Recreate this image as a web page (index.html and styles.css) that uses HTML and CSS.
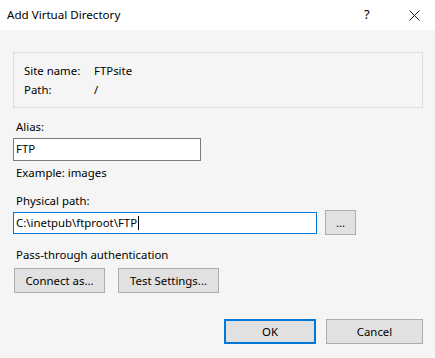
FILE: index.html
```html
<!DOCTYPE html>
<html lang="en">
<head>
    <meta charset="UTF-8">
    <meta name="viewport" content="width=device-width, initial-scale=1.0">
    <title>Add Virtual Directory</title>
    <link rel="stylesheet" href="styles.css">
</head>
<body>
    <div class="dialog">
        <div class="titlebar">
            <div class="title">Add Virtual Directory</div>
            <div class="help">?</div>
            <div class="close">
                <svg width="11" height="11" viewBox="0 0 11 11">
                    <path d="M0.5 0.5 L10.5 10.5 M10.5 0.5 L0.5 10.5" stroke="#1a1a1a" stroke-width="1" fill="none"/>
                </svg>
            </div>
        </div>
        <div class="content">
            <div class="info">
                <div class="info-row"><span class="info-label">Site name:</span><span>FTPsite</span></div>
                <div class="info-row"><span class="info-label">Path:</span><span>/</span></div>
            </div>

            <div class="label first">Alias:</div>
            <div class="field alias">FTP</div>
            <div class="label hint">Example: images</div>

            <div class="label section">Physical path:</div>
            <div class="path-row">
                <div class="field path focused">C:\inetpub\ftproot\FTP<span class="caret"></span></div>
                <button class="btn browse">...</button>
            </div>

            <div class="label section">Pass-through authentication</div>
            <div class="auth-row">
                <button class="btn connect">Connect as...</button>
                <button class="btn test">Test Settings...</button>
            </div>

            <div class="actions">
                <button class="btn ok">OK</button>
                <button class="btn cancel">Cancel</button>
            </div>
        </div>
    </div>
</body>
</html>
```

FILE: styles.css
```css
body {
    margin: 0;
    padding: 0;
    font-family: "Segoe UI", "Noto Sans", "Liberation Sans", sans-serif;
    font-size: 11.4px;
    color: #000;
    background: #f5f5f5;
}
.dialog {
    width: 435px;
    height: 358px;
    display: flex;
    flex-direction: column;
    background: #f5f5f5;
}
.titlebar {
    height: 30px;
    background: #fff;
    display: flex;
    align-items: center;
    padding-left: 7px;
}
.title {
    flex-grow: 1;
    font-size: 11.6px;
    margin-top: -1px;
}
.help {
    font-size: 13px;
    width: 8px;
    margin-right: 37px;
    margin-top: -2px;
}
.close {
    width: 11px;
    height: 11px;
    margin-right: 15px;
    margin-top: -1px;
}
.content {
    padding: 22px 12px 0 13px;
    display: flex;
    flex-direction: column;
}
.info {
    border: 1px solid #dcdcdc;
    padding: 8px 10px 8px 10px;
    height: 38px;
}
.info-row {
    display: flex;
    line-height: 19px;
}
.info-label {
    width: 70px;
}
.label {
    line-height: 16px;
    padding-left: 3px;
}
.label.first {
    margin-top: 11px;
}
.label.hint {
    margin-top: 4px;
}
.label.section {
    margin-top: 12px;
}
.field {
    box-sizing: border-box;
    background: #fff;
    border: 1px solid #7a7a7a;
    height: 23px;
    line-height: 20px;
    padding-left: 2px;
    margin-top: 3px;
}
.field.alias {
    width: 188px;
}
.path-row {
    display: flex;
    align-items: center;
    margin-top: 1px;
}
.field.path {
    width: 304px;
    height: 22px;
    margin-top: 0;
}
.field.focused {
    border-color: #0078d7;
}
.caret {
    display: inline-block;
    width: 1px;
    height: 14px;
    background: #000;
    vertical-align: -3px;
    margin-left: 1px;
}
.btn {
    box-sizing: border-box;
    font-family: inherit;
    font-size: 11.4px;
    color: #000;
    background: #e1e1e1;
    border: 1px solid #adadad;
    height: 25px;
    padding: 0;
    outline: 0;
}
.btn.browse {
    width: 31px;
    height: 25px;
    margin-left: 8px;
}
.auth-row {
    display: flex;
    gap: 13px;
    margin-top: 5px;
    padding-left: 1px;
}
.btn.connect {
    width: 91px;
}
.btn.test {
    width: 101px;
}
.actions {
    display: flex;
    justify-content: flex-end;
    gap: 10px;
    margin-top: 26px;
}
.btn.ok {
    width: 92px;
    border: 2px solid #0078d7;
}
.btn.cancel {
    width: 97px;
}
```
